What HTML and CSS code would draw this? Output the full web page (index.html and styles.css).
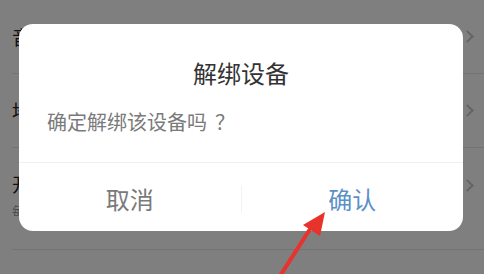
FILE: index.html
```html
<!DOCTYPE html>
<html lang="zh-CN">
<head>
  <meta charset="UTF-8">
  <meta name="viewport" content="width=device-width, initial-scale=1.0">
  <title>解绑设备</title>
  <link rel="stylesheet" href="styles.css">
</head>
<body>
  <div class="list">
    <div class="row">
      <span class="row-title">音</span>
      <span class="chevron"></span>
    </div>
    <div class="row">
      <span class="row-title">地</span>
      <span class="chevron"></span>
    </div>
    <div class="row row-tall">
      <div class="row-text">
        <span class="row-title">开</span>
        <span class="row-sub">每</span>
      </div>
      <span class="chevron"></span>
    </div>
  </div>

  <div class="mask">
    <div class="dialog">
      <h2 class="dialog-title">解绑设备</h2>
      <p class="dialog-msg">确定解绑该设备吗<span class="qmark">？</span></p>
      <div class="dialog-btns">
        <button class="btn btn-cancel">取消</button>
        <span class="btn-sep"></span>
        <button class="btn btn-ok">确认</button>
      </div>
    </div>
  </div>

  <!-- 指示箭头 -->
  <svg class="pointer" width="484" height="274" viewBox="0 0 484 274">
    <line x1="280" y1="276" x2="312" y2="226" stroke="#e8322c" stroke-width="4"/>
    <polygon points="325,212 303,225 320,236" fill="#e8322c"/>
  </svg>
</body>
</html>
```

FILE: styles.css
```css
* {
  margin: 0;
  padding: 0;
  box-sizing: border-box;
}

body {
  width: 484px;
  height: 274px;
  overflow: hidden;
  position: relative;
  font-family: "Noto Sans CJK SC", "Noto Sans", sans-serif;
  background: #fff;
  color: #222;
  text-spacing-trim: space-all;
}

/* 背景のリスト */
.list {
  padding-left: 12px;
}

.row {
  height: 74px;
  display: flex;
  align-items: center;
  justify-content: space-between;
  padding-right: 12px;
  border-bottom: 1px solid #e6e6e6;
}

.row-tall {
  height: 102px;
  align-items: flex-start;
  padding-top: 23px;
}

.row-text {
  display: flex;
  flex-direction: column;
}

.row-title {
  font-size: 19px;
  line-height: 26px;
}

.row-sub {
  font-size: 13px;
  color: #999;
  margin-top: 4px;
}

.chevron {
  width: 9px;
  height: 9px;
  border-top: 2px solid #c8c8c8;
  border-right: 2px solid #c8c8c8;
  transform: rotate(45deg);
}

.row-tall .chevron {
  margin-top: 10px;
}

/* ダイアログ */
.mask {
  position: absolute;
  inset: 0;
  background: rgba(0, 0, 0, 0.5);
  display: flex;
  justify-content: center;
  align-items: flex-start;
  padding-top: 24px;
  padding-right: 2px;
}

.dialog {
  width: 444px;
  height: 207px;
  background: #fff;
  border-radius: 14px;
  display: flex;
  flex-direction: column;
}

.dialog-title {
  font-size: 24px;
  font-weight: normal;
  line-height: 30px;
  text-align: center;
  color: #333;
  padding-top: 34px;
}

.dialog-msg {
  font-size: 20px;
  line-height: 28px;
  color: #7a7a7a;
  margin-top: 20px;
  padding-left: 28px;
  padding-bottom: 26px;
  border-bottom: 1px solid #f0f0f0;
}

.qmark {
  font-family: "Noto Sans CJK JP", sans-serif;
  margin-left: 8px;
}

.dialog-btns {
  flex: 1;
  display: flex;
  align-items: center;
}

.btn {
  flex: 1;
  height: 100%;
  border: none;
  background: none;
  font-family: inherit;
  font-size: 24px;
  padding-top: 2px;
}

.btn-cancel {
  color: #7a7a7a;
}

.btn-ok {
  color: #5b8fc9;
}

.btn-sep {
  width: 1px;
  height: 27px;
  margin-top: 4px;
  background: #f2f2f2;
}

.pointer {
  position: absolute;
  left: 0;
  top: 0;
}
```
